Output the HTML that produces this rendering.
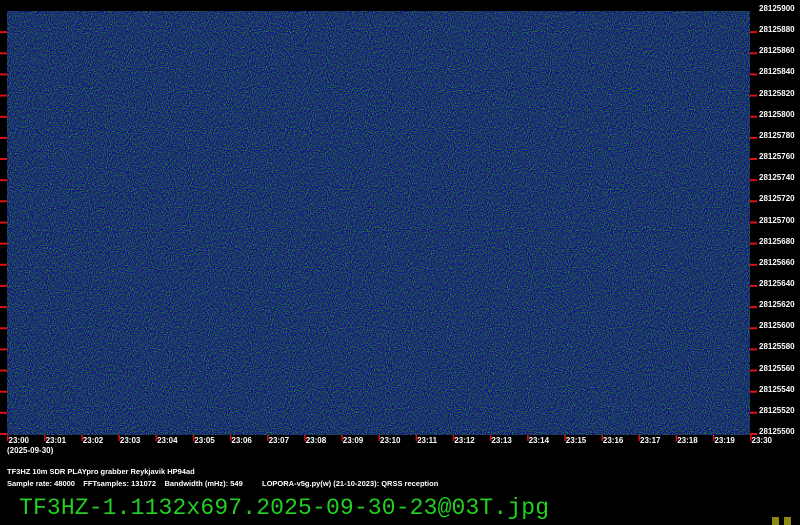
<!DOCTYPE html>
<html><head><meta charset="utf-8"><style>
body{margin:0;width:800px;height:525px;background:#000;overflow:hidden;position:relative;font-family:"Liberation Sans",sans-serif}
.t{position:absolute;color:#fff;font-size:8px;font-weight:bold;white-space:nowrap}
.s{font-size:7.5px}
.big{position:absolute;left:19px;top:495px;color:#22d022;font-family:"Liberation Mono",monospace;font-size:23px;letter-spacing:0.15px;white-space:nowrap}
</style></head><body>
<svg width="800" height="525" style="position:absolute;left:0;top:0">
<defs>
<filter id="n" x="0" y="0" width="100%" height="100%" color-interpolation-filters="sRGB">
<feTurbulence type="fractalNoise" baseFrequency="0.95" numOctaves="1" seed="3" result="a"/>
<feColorMatrix in="a" type="matrix" values="0 0 0 0 0.1  1.2 -1.2 0 0 0.2  -1.0 1.0 0 0 0.42  0 0 0 0 1"/>
</filter>
</defs>
<rect x="7" y="11" width="743" height="424" fill="#1b3a78"/>
<rect x="7" y="11" width="743" height="424" filter="url(#n)"/>
<g id="ticks"></g>
<rect x="772" y="517" width="7" height="8" fill="#8a8a10"/>
<rect x="784" y="517" width="7" height="8" fill="#8a8a10"/>
</svg>
<div id="lab"></div>
<div class="t" style="left:7px;top:446px">(2025-09-30)</div>
<div class="t s" style="left:7px;top:467px">TF3HZ 10m SDR PLAYpro grabber Reykjavik HP94ad</div>
<div class="t s" style="left:7px;top:479px">Sample rate: 48000&nbsp;&nbsp;&nbsp; FFTsamples: 131072&nbsp;&nbsp;&nbsp; Bandwidth (mHz): 549</div>
<div class="t s" style="left:262px;top:479px">LOPORA-v5g.py(w) (21-10-2023): QRSS reception</div>
<div class="big">TF3HZ-1.1132x697.2025-09-30-23@03T.jpg</div>
<script>
var g=document.getElementById('ticks'),s='',h='';
for(var i=0;i<=20;i++){var y=11+i*21.15;
 if(i>0)s+='<rect x="0" y="'+(y-1).toFixed(1)+'" width="7" height="2" fill="#e01010"/><rect x="750" y="'+(y-1).toFixed(1)+'" width="7" height="2" fill="#e01010"/>';
 h+='<div class="t" style="left:759px;top:'+(y-7).toFixed(1)+'px">'+(28125900-i*20)+'</div>';}
for(var j=0;j<=20;j++){var x=7+j*37.15;
 s+='<rect x="'+x.toFixed(1)+'" y="435" width="1.5" height="6" fill="#e01010"/>';
 h+='<div class="t" style="left:'+(x+1.5).toFixed(1)+'px;top:436px">23:'+(j==20?'30':('0'+j).slice(-2))+'</div>';}
g.innerHTML=s;document.getElementById('lab').innerHTML=h;
</script>
</body></html>
